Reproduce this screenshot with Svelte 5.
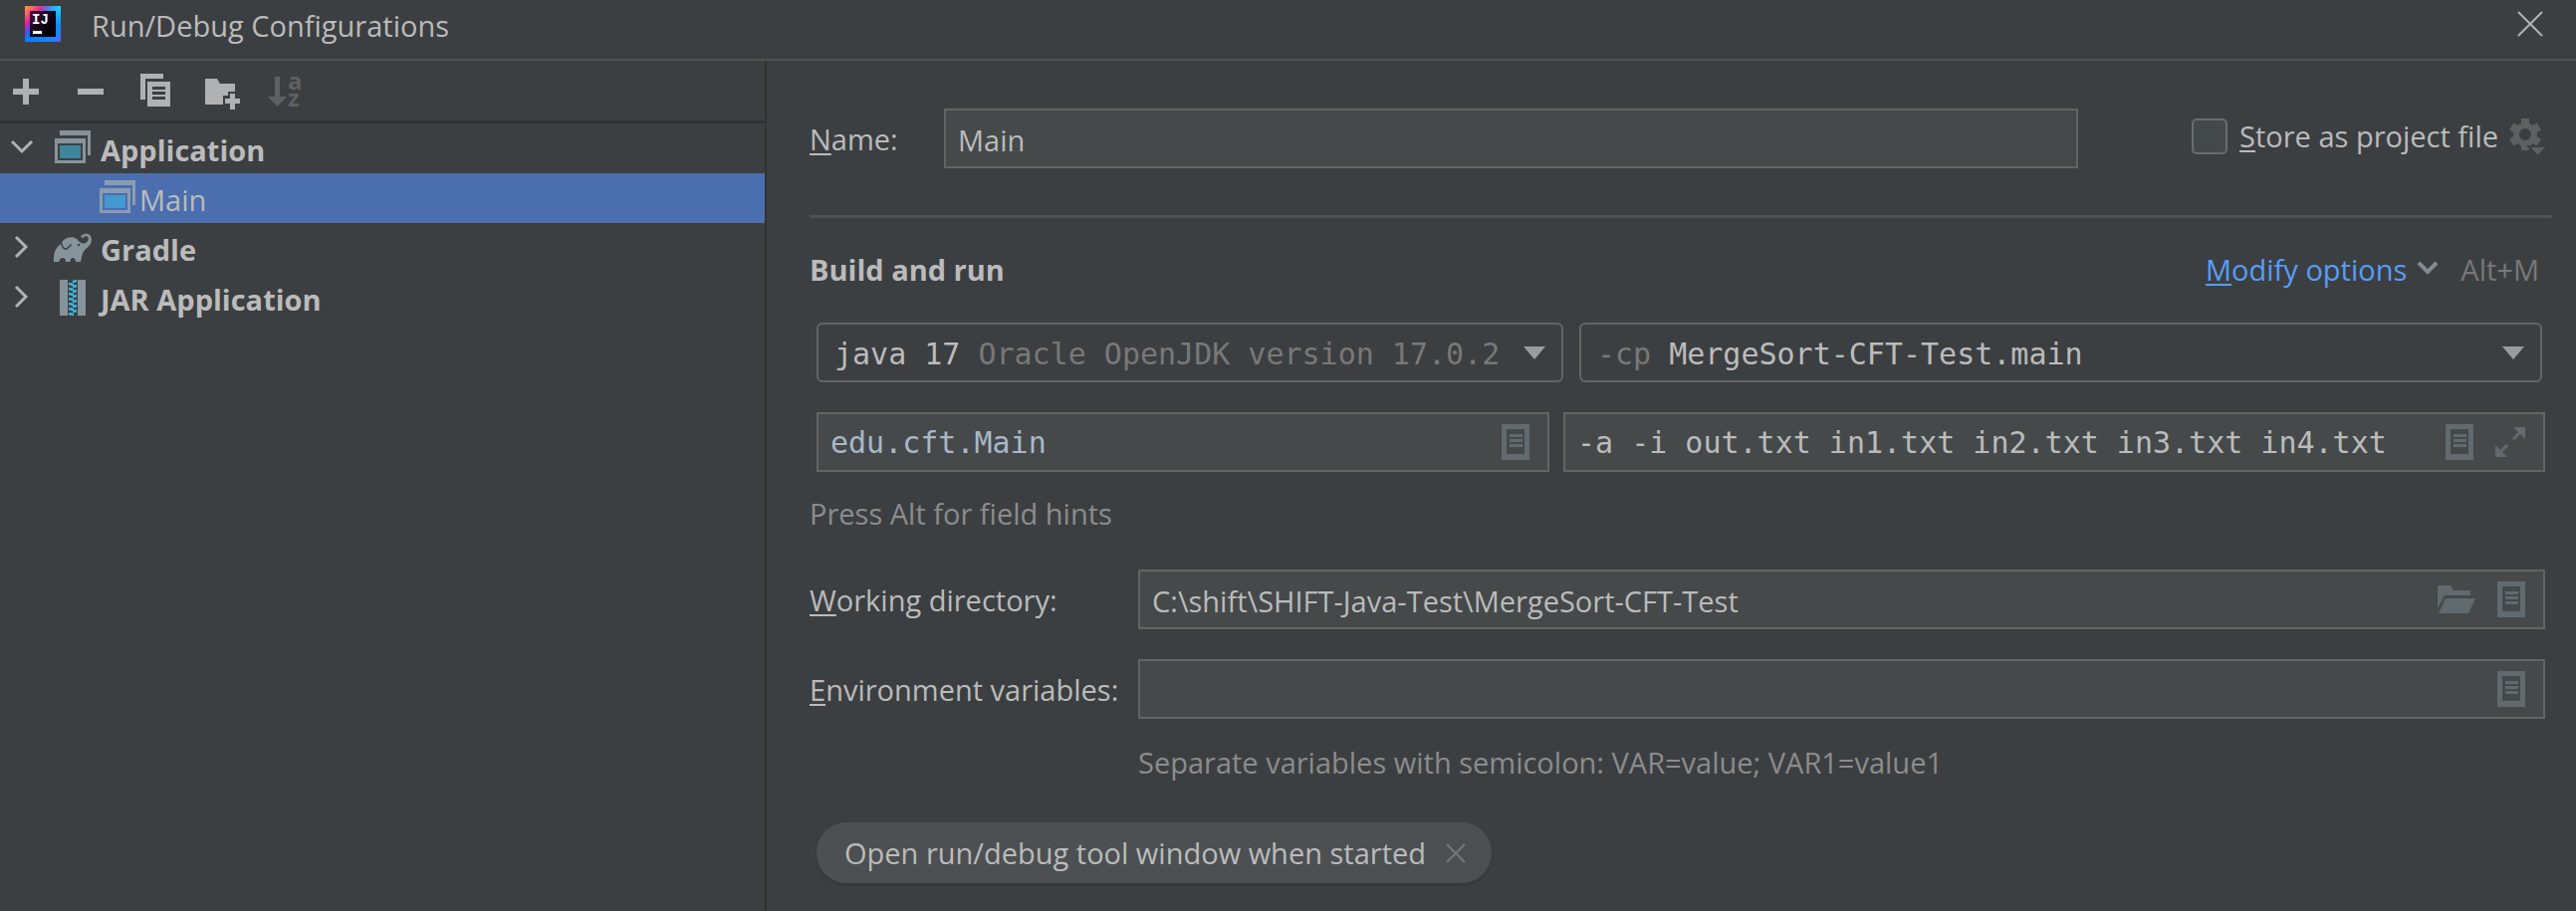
<script>
  let name = $state('Main');
  let mainClass = $state('edu.cft.Main');
  let programArgs = $state('-a -i out.txt in1.txt in2.txt in3.txt in4.txt');
  let workingDir = $state('C:\\shift\\SHIFT-Java-Test\\MergeSort-CFT-Test');
  let env = $state('');
  let stored = $state(false);
</script>

{#snippet appIcon()}
  <svg class="icon app" width="36" height="36" viewBox="0 0 36 36" aria-hidden="true">
    <path class="frame" d="M5 0h31v25h-3V5H5z" />
    <path class="frame" fill-rule="evenodd" d="M0 8h31v25H0zM3 13v17h25V13z" />
    <path class="pane" d="M5 15h21v13H5z" />
  </svg>
{/snippet}

{#snippet macroIcon()}
  <svg width="28" height="36" viewBox="0 0 28 36" aria-hidden="true">
    <path fill="#616a6e" fill-rule="evenodd" d="M0 0h28v36H0zM5 5v25h18V5z" />
    <path fill="#616a6e" d="M8 10h13v3H8zM8 15h13v3H8zM8 20h13v3H8z" />
  </svg>
{/snippet}

{#snippet comboArrow()}
  <svg class="arrow" width="22" height="13" viewBox="0 0 22 13" aria-hidden="true">
    <path fill="#9a9da0" d="M0 0h22L11 13z" />
  </svg>
{/snippet}

{#snippet chevron()}
  <svg class="chevron" width="22" height="22" viewBox="0 0 22 22" aria-hidden="true">
    <path fill="none" stroke="#afb1b3" stroke-width="3" d="M5 1l10 10L5 21" />
  </svg>
{/snippet}

<div class="dialog">
  <header>
    <svg class="logo" width="36" height="36" viewBox="0 0 36 36" aria-hidden="true">
      <defs>
        <linearGradient id="edge" x1="0" y1="0" x2="1" y2="1">
          <stop offset="0" stop-color="#ff9a3c" />
          <stop offset=".12" stop-color="#fd6a5e" />
          <stop offset=".26" stop-color="#e0249b" />
          <stop offset=".38" stop-color="#5a4be0" />
          <stop offset=".48" stop-color="#087cfa" />
          <stop offset=".85" stop-color="#1a86fb" />
          <stop offset="1" stop-color="#6b57ff" />
        </linearGradient>
        <linearGradient id="core" x1="0" y1="0" x2="1" y2="1">
          <stop offset="0" stop-color="#4a0a40" />
          <stop offset=".6" stop-color="#0c0210" />
          <stop offset="1" stop-color="#000" />
        </linearGradient>
        <radialGradient id="glow" cx="1" cy="0" r=".6">
          <stop offset="0" stop-color="#21d7ff" />
          <stop offset="1" stop-color="#21d7ff" stop-opacity="0" />
        </radialGradient>
      </defs>
      <path fill="url(#edge)" d="M0 0h36v36H0z" />
      <path fill="url(#glow)" d="M0 0h36v36H0z" />
      <path fill="url(#core)" d="M5 5h26v26H5z" />
      <text x="7" y="18" fill="#fff" font-family="Liberation Mono" font-weight="700" font-size="14">IJ</text>
      <path fill="#fff" d="M8 25h9v3H8z" />
    </svg>
    <h1>Run/Debug Configurations</h1>
    <button class="close" aria-label="Close">
      <svg width="24" height="24" viewBox="0 0 24 24" aria-hidden="true">
        <path stroke="#afb1b3" stroke-width="2" d="M0 0l24 24M24 0L0 24" />
      </svg>
    </button>
  </header>

  <div class="body">
    <aside>
      <div class="toolbar" role="toolbar" aria-label="Configuration actions">
        <button aria-label="Add">
          <svg width="36" height="36" viewBox="0 0 36 36"><path fill="#afb1b3" d="M15 6h6v10h10v6H21v10h-6V22H5v-6h10z" /></svg>
        </button>
        <button aria-label="Remove">
          <svg width="36" height="36" viewBox="0 0 36 36"><path fill="#afb1b3" d="M5 16h26v6H5z" /></svg>
        </button>
        <button aria-label="Copy">
          <svg width="36" height="36" viewBox="0 0 36 36">
            <path fill="#afb1b3" d="M3 1h23v5H8v21H3z" />
            <path fill="#afb1b3" fill-rule="evenodd" d="M10 9h23v25H10zM15 14v3h13v-3zM15 19v3h13v-3zM15 24v3h13v-3z" />
          </svg>
        </button>
        <button aria-label="New folder">
          <svg width="36" height="36" viewBox="0 0 36 36">
            <path fill="#afb1b3" d="M3 6h12l3 5h15v8h-7v4h-5v9H3z" />
            <path fill="#afb1b3" d="M28 21h5v5h5v5h-5v6h-5v-6h-5v-5h5z" />
          </svg>
        </button>
        <button aria-label="Sort" disabled>
          <svg width="36" height="36" viewBox="0 0 36 36">
            <path fill="#5e6061" d="M8 4h5v20h7L10.500 34 1 24h7z" />
            <text x="21" y="17" class="az">a</text>
            <text x="21" y="34" class="az">z</text>
          </svg>
        </button>
      </div>

      <ul class="tree">
        <li>
          <button class="node open">{@render chevron()}{@render appIcon()}<b>Application</b></button>
          <ul>
            <li><button class="node leaf selected">{@render appIcon()}<span>Main</span></button></li>
          </ul>
        </li>
        <li>
          <button class="node">
            {@render chevron()}
            <svg class="icon" width="36" height="36" viewBox="0 0 36 36" aria-hidden="true">
              <path
                fill="#87939a"
                d="M-1 32C-1.500 24 0 19 5 15L7 12C11 7 18 6 22 9C24 11 26 14 29 13.500C33 13 34.500 9 33.500 7.500C32.500 5.500 29.500 6 28 8.500L26 6.500C28 3.500 32 3 34.500 4.500C38 7 37.500 13 34 16.500C30 20 28 22 27 27L26 32H21C21 29 19.500 28 18 28C16.500 28 15.500 29 15.500 32H11C11 29 10 28 8 28C6 28 4.500 29 4.500 32Z"
              />
              <path fill="none" stroke="#3c3f41" stroke-width="1.500" d="M6.500 12c.5 5 2.500 7.500 5 7 2-.5 3-2.500 5-4.500" />
              <circle cx="24" cy="15" r="1.200" fill="#3c3f41" />
            </svg>
            <b>Gradle</b>
          </button>
        </li>
        <li>
          <button class="node">
            {@render chevron()}
            <svg class="icon" width="36" height="36" viewBox="0 0 36 36" aria-hidden="true">
              <path fill="#87939a" d="M5 0h8v36H5zM23 0h8v36h-8z" />
              <path
                fill="none"
                stroke="#40b6e0"
                stroke-width="2.500"
                d="M18 2l4-1M14 4l5 1M18 7l4-1M14 9l5 1M18 12l4-1M14 14l5 1M18 17l4-1M14 19l5 1M18 22l4-1M14 24l5 1M18 27l4-1M14 29l5 1M18 32l4-1M14 34l5 1"
              />
            </svg>
            <b>JAR Application</b>
          </button>
        </li>
      </ul>
    </aside>

    <main>
      <div class="name-row">
        <label class="caption" for="name"><u>N</u>ame:</label>
        <div class="field"><input id="name" bind:value={name} /></div>
        <div class="store">
          <input id="store" type="checkbox" bind:checked={stored} />
          <label for="store"><u>S</u>tore as project file</label>
          <button class="gear" aria-label="Storage options" disabled>
            <svg width="36" height="36" viewBox="0 0 36 36">
              <g fill="#5e6061">
                <circle cx="16" cy="16" r="12" />
                <rect x="12" width="8" height="32" />
                <rect x="12" width="8" height="32" transform="rotate(60 16 16)" />
                <rect x="12" width="8" height="32" transform="rotate(120 16 16)" />
              </g>
              <circle cx="16" cy="16" r="6" fill="#3c3f41" />
              <path fill="#5e6061" stroke="#3c3f41" stroke-width="2" d="M19 28h19L28.500 38z" />
            </svg>
          </button>
        </div>
      </div>

      <hr />

      <div class="section">
        <h2>Build and run</h2>
        <a href="#options"><u>M</u>odify options</a>
        <svg width="20" height="14" viewBox="0 0 20 14" aria-hidden="true">
          <path fill="none" stroke="#7f8b91" stroke-width="4" d="M1 1l9 9 9-9" />
        </svg>
        <kbd>Alt+M</kbd>
      </div>

      <div class="combos">
        <div class="combo">
          <label for="jre">java 17</label>
          <select id="jre" class="dim"><option>Oracle OpenJDK version 17.0.2</option></select>
          {@render comboArrow()}
        </div>
        <div class="combo">
          <label for="module" class="dim">-cp</label>
          <select id="module"><option>MergeSort-CFT-Test.main</option></select>
          {@render comboArrow()}
        </div>
      </div>

      <div class="editors">
        <div class="field">
          <input class="code" aria-label="Main class" bind:value={mainClass} />
          <button aria-label="Insert macros">{@render macroIcon()}</button>
        </div>
        <div class="field">
          <input aria-label="Program arguments" bind:value={programArgs} />
          <button aria-label="Insert macros">{@render macroIcon()}</button>
          <button aria-label="Expand">
            <svg width="30" height="30" viewBox="0 0 30 30">
              <path fill="#616a6e" d="M18 0h12v12zM0 18v12h12z" />
              <path stroke="#616a6e" stroke-width="3" d="M18 12l7-7M12 18l-7 7" />
            </svg>
          </button>
        </div>
      </div>

      <p class="hint">Press Alt for field hints</p>

      <div class="form">
        <label for="dir"><u>W</u>orking directory:</label>
        <div class="field">
          <input id="dir" bind:value={workingDir} />
          <button aria-label="Browse">
            <svg width="38" height="28" viewBox="0 0 38 28">
              <path fill="#616a6e" d="M0 0h13l3 5h17v5H7L0 23zM8 13h30l-7 15H1z" />
            </svg>
          </button>
          <button aria-label="Insert macros">{@render macroIcon()}</button>
        </div>
        <label for="env"><u>E</u>nvironment variables:</label>
        <div class="field">
          <input id="env" bind:value={env} />
          <button aria-label="Edit environment variables">{@render macroIcon()}</button>
        </div>
        <p class="hint">Separate variables with semicolon: VAR=value; VAR1=value1</p>
      </div>

      <div class="chip">
        <span>Open run/debug tool window when started</span>
        <button aria-label="Remove option">
          <svg width="20" height="20" viewBox="0 0 20 20">
            <path stroke="#72777a" stroke-width="2" d="M1 1l18 18M19 1L1 19" />
          </svg>
        </button>
      </div>
    </main>
  </div>
</div>

<style>
  :global(body) {
    margin: 0;
    background: #3c3f41;
  }

  .dialog {
    display: flex;
    flex-direction: column;
    min-height: 100vh;
    color: #bbb;
    font: 29px/40px "Open Sans", "Noto Sans", sans-serif;
  }

  .dialog * {
    box-sizing: border-box;
  }

  h1,
  h2,
  p,
  ul {
    margin: 0;
    padding: 0;
    font-size: inherit;
    list-style: none;
  }

  button,
  input,
  select {
    margin: 0;
    padding: 0;
    border: 0;
    background: none;
    color: inherit;
    font: inherit;
  }

  svg {
    display: block;
    flex: none;
    overflow: visible;
  }

  u {
    text-decoration-thickness: 2px;
    text-underline-offset: 3px;
  }

  header {
    display: flex;
    align-items: flex-start;
    padding: 6px 34px 13px 25px;
    border-bottom: 2px solid #515151;
  }

  h1 {
    flex: 1;
    padding-left: 31px;
    font-weight: 400;
  }

  .close {
    padding: 6px 0;
  }

  .body {
    display: flex;
    flex: 1;
  }

  aside {
    flex: 0 1 770px;
    border-right: 2px solid #323232;
  }

  .toolbar {
    display: flex;
    gap: 29px;
    padding: 12px 8px;
    border-bottom: 3px solid #323232;
  }

  .az {
    fill: #5e6061;
    font-size: 24px;
    font-weight: 700;
  }

  .node {
    display: flex;
    align-items: center;
    width: 100%;
    height: 50px;
    padding-left: 11px;
    text-align: left;
  }

  .node b,
  .node span {
    padding-top: 3px;
  }

  .chevron {
    margin: 0 22px 2px 0;
  }

  .open .chevron {
    transform: rotate(90deg);
  }

  .icon {
    margin-right: 10px;
  }

  .frame {
    fill: #87939a;
  }

  .pane {
    fill: #3e86a0;
  }

  .leaf {
    padding-left: 100px;
  }

  .leaf .icon {
    margin-right: 4px;
  }

  .selected {
    background: #4b6eaf;
  }

  .selected .frame {
    fill: #8b9cb2;
  }

  .selected .pane {
    fill: #4499d1;
  }

  main {
    flex: 1;
    min-width: 0;
    padding: 48px 24px 28px 43px;
  }

  .name-row {
    display: flex;
    align-items: center;
    padding-right: 7px;
  }

  .name-row .field {
    flex: 1;
  }

  .caption {
    width: 135px;
  }

  .caption,
  .form label,
  .combo label,
  .combo select,
  .name-row .field input,
  .form input {
    padding-top: 2px;
  }

  .field {
    display: flex;
    align-items: center;
    gap: 22px;
    height: 60px;
    padding: 0 18px 0 12px;
    border: 2px solid #646464;
    background: #45494a;
  }

  .field input {
    flex: 1;
    min-width: 0;
    height: 44px;
  }

  .store {
    display: flex;
    align-items: center;
    margin-left: 114px;
    padding-bottom: 4px;
  }

  .store input {
    width: 36px;
    height: 36px;
    margin-right: 12px;
    border: 2px solid #6b6b6b;
    border-radius: 5px;
    background: #43494a;
    appearance: none;
  }

  .gear {
    margin-left: 11px;
  }

  hr {
    height: 3px;
    margin: 47px 0 32px;
    border: 0;
    background: #515151;
  }

  .section {
    display: flex;
    align-items: center;
    padding-right: 13px;
  }

  .section svg {
    margin-bottom: 2px;
  }

  h2 {
    flex: 1;
  }

  a {
    margin-right: 11px;
    color: #589df6;
    text-decoration: none;
  }

  kbd {
    margin-left: 23px;
    color: #787878;
    font: inherit;
  }

  .combos,
  .editors {
    display: grid;
    font: 30px/40px "DejaVu Sans Mono", monospace;
  }

  .combos {
    grid-template-columns: 750fr 967fr;
    gap: 16px;
    margin: 33px 10px 30px 7px;
  }

  .editors {
    grid-template-columns: 736fr 986fr;
    gap: 14px;
    margin: 0 7px 22px;
  }

  .combo {
    display: flex;
    align-items: center;
    height: 60px;
    padding: 0 16px;
    border: 2px solid #646464;
    border-radius: 6px;
  }

  .combo label,
  .combo select {
    padding-top: 4px;
  }

  .combo select {
    flex: 1;
    min-width: 0;
    height: 44px;
    margin-left: 18px;
    appearance: none;
  }

  .dim {
    color: #787878;
  }

  .code {
    color: #a9b7c6;
  }

  .hint {
    color: #8c8c8c;
  }

  .form {
    display: grid;
    grid-template-columns: 330px 1fr;
    align-items: center;
    row-gap: 30px;
    margin: 36px 7px 40px 0;
  }

  .form .hint {
    grid-column: 2;
    margin-top: -6px;
  }

  .chip {
    display: inline-flex;
    align-items: center;
    gap: 20px;
    height: 61px;
    margin-left: 7px;
    padding: 0 26px 0 28px;
    border-radius: 30px;
    background: #4c5052;
    box-shadow: 0 3px 2px #37393b;
  }
</style>
